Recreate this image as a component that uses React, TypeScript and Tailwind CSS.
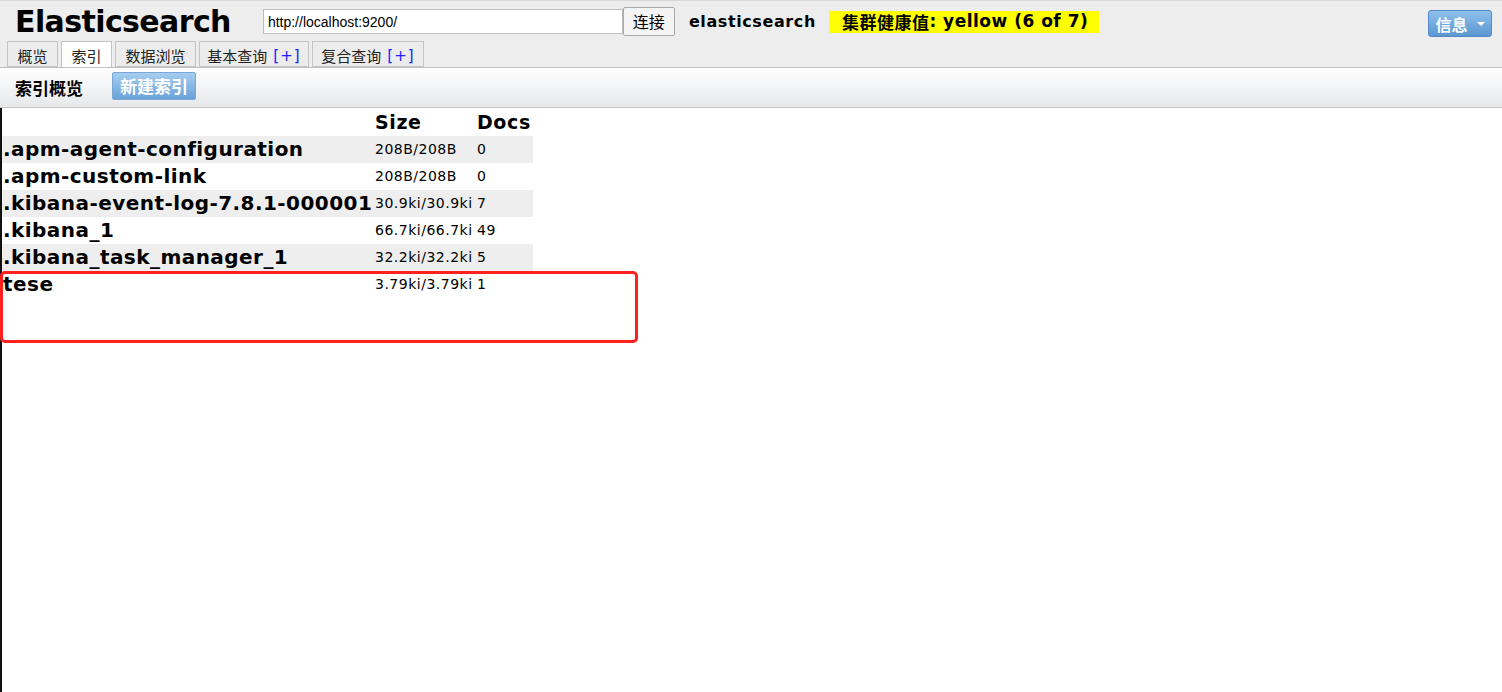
import React from "react";

const verdana = { fontFamily: '"DejaVu Sans", "Noto Sans CJK SC", sans-serif' };
const cjk = { fontFamily: '"Noto Sans CJK SC", sans-serif' };

type Row = { name: string; size: string; docs: string };

const rows: Row[] = [
  { name: ".apm-agent-configuration", size: "208B/208B", docs: "0" },
  { name: ".apm-custom-link", size: "208B/208B", docs: "0" },
  { name: ".kibana-event-log-7.8.1-000001", size: "30.9ki/30.9ki", docs: "7" },
  { name: ".kibana_1", size: "66.7ki/66.7ki", docs: "49" },
  { name: ".kibana_task_manager_1", size: "32.2ki/32.2ki", docs: "5" },
  { name: "tese", size: "3.79ki/3.79ki", docs: "1" },
];

const tabs = [
  { label: "概览", w: "w-[51px]" },
  { label: "索引", w: "w-[51px]", active: true },
  { label: "数据浏览", w: "w-[81px]" },
  { label: "基本查询", w: "w-[110px]", plus: true },
  { label: "复合查询", w: "w-[112px]", plus: true },
];

function Tab({ label, w, active, plus }: { label: string; w: string; active?: boolean; plus?: boolean }) {
  return (
    <div
      className={`${w} flex h-[26px] items-center justify-center whitespace-nowrap border border-[#c4c4c4] pt-[4px] text-[15px] text-[#222] ${
        active ? "border-b-0 bg-white" : "bg-[#ececec]"
      }`}
      style={cjk}
    >
      {label}
      {plus && (
        <span className="ml-[6px] tracking-[1px] text-[#2020ff]" style={verdana}>
          [+]
        </span>
      )}
    </div>
  );
}

export default function App() {
  return (
    <div className="h-[692px] w-[1502px] overflow-hidden bg-white text-black" style={verdana}>
      <header className="border-t border-[#d8d8d8] bg-[#ededed]">
        <div className="flex h-[41px] items-center">
          <h1 className="ml-[15px] text-[30px] font-bold leading-none tracking-[-0.6px]">Elasticsearch</h1>
          <input
            readOnly
            value="http://localhost:9200/"
            className="ml-[32px] h-[25px] w-[360px] border border-[#bdbdbd] bg-white px-[4px] text-[14px] outline-none"
            style={{ fontFamily: '"Liberation Sans", sans-serif' }}
          />
          <button className="mb-[1px] h-[29px] w-[52px] rounded-[2px] border border-[#a9a9a9] bg-[#f4f4f4] text-[16px]" style={cjk}>
            连接
          </button>
          <span className="ml-[14px] text-[16px] font-bold tracking-[0.6px]">elasticsearch</span>
          <span className="ml-[13px] flex h-[22px] w-[270px] items-center bg-[#ffff00] pl-[13px] text-[17px] font-bold tracking-[0.5px]">
            <span style={cjk}>集群健康值</span>: yellow (6 of 7)
          </span>
          <button
            className="ml-auto mr-[10px] mt-[4px] flex h-[27px] w-[64px] items-center justify-center gap-[9px] rounded-[3px] border border-[#5289c5] bg-gradient-to-b from-[#8fc0ec] to-[#5a97d1] text-[16px] font-bold text-white"
            style={cjk}
          >
            信息
            <span className="h-0 w-0 border-x-[4px] border-t-[4px] border-x-transparent border-t-white" />
          </button>
        </div>
        <nav className="flex h-[26px] items-end gap-[3px] border-b border-[#c0c0c0] pl-[7px]">
          {tabs.map((t) => (
            <Tab key={t.label} {...t} />
          ))}
        </nav>
      </header>

      <div className="flex h-[40px] items-center border-b border-[#c8c8c8] bg-gradient-to-b from-white to-[#e6e8ea]">
        <span className="ml-[15px] text-[17px] font-bold" style={cjk}>
          索引概览
        </span>
        <button
          className="mb-[3px] ml-[29px] h-[28px] w-[84px] rounded-[2px] border border-[#7aa7d6] bg-gradient-to-b from-[#a6cdf0] to-[#6aa2d8] text-[17px] font-bold text-white"
          style={cjk}
        >
          新建索引
        </button>
      </div>

      <main className="relative h-[584px] border-l-2 border-[#111]">
        <div className="w-[531px] pt-[1px]">
          <div className="grid h-[27px] grid-cols-[373px_102px_56px] text-[19px] font-bold leading-[27px] tracking-[0.6px]">
            <span />
            <span>Size</span>
            <span>Docs</span>
          </div>
          {rows.map((r, i) => (
            <div
              key={r.name}
              className={`grid grid-cols-[373px_102px_56px] ${i % 2 === 0 && i < 5 ? "bg-[#eeeeee]" : ""} ${
                i === 5 ? "h-[60px]" : "h-[27px]"
              }`}
            >
              <span className="whitespace-nowrap pl-[1px] text-[20px] font-bold leading-[27px] tracking-[0.45px]">{r.name}</span>
              <span className="whitespace-nowrap pt-[5px] text-[14px] leading-[16px] tracking-[0.5px]">{r.size}</span>
              <span className="pt-[5px] text-[14px] leading-[16px] tracking-[0.5px]">{r.docs}</span>
            </div>
          ))}
        </div>
        <div className="absolute left-[-2px] top-[163px] h-[72px] w-[638px] rounded-[5px] border-[3px] border-[#ff2020]" />
      </main>
    </div>
  );
}
